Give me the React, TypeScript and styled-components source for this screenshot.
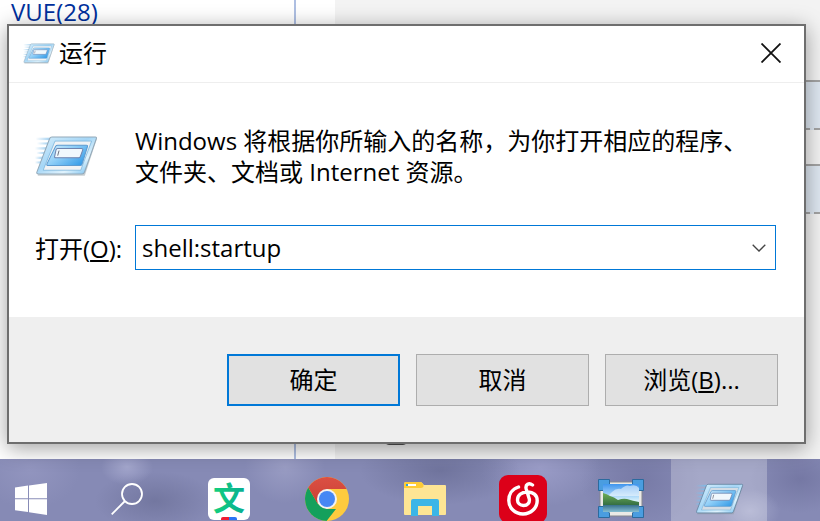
import React, { useId, useState } from "react";
import styled, { createGlobalStyle } from "styled-components";

const GlobalStyle = createGlobalStyle`
  * { box-sizing: border-box; }
  body {
    margin: 0;
    overflow: hidden;
    font-family: "Open Sans", "Noto Sans CJK SC", sans-serif;
    font-size: 24px;
    line-height: 32px;
    color: #000;
  }
  button, input { font: inherit; color: inherit; }
  svg { display: block; flex: none; }
`;

const Screen = styled.div`
  display: flex;
  flex-direction: column;
  height: 100vh;
`;

const Desktop = styled.main`
  position: relative;
  flex: 1;
  min-height: 0;
  display: flex;
  background: #fff;
`;

const Sidebar = styled.nav`
  width: 296px;
  padding: 0 11px;
  border-right: 2px solid #aebfe2;
  line-height: 24px;
`;

const CategoryLink = styled.a`
  color: #00309c;
  text-decoration: none;
`;

const Article = styled.section`
  flex: 1;
  display: flex;
  flex-direction: column;
  gap: 34px;
  margin-left: 39px;
  padding: 80px 0 14px;
  background: #f3f3f3;
`;

const CodeBlock = styled.div`
  height: 50px;
  border-top: 2px solid #a4a4a4;
  border-bottom: 2px dashed #a4a4a4;
  background: #dfe8f2;
`;

const Marker = styled.div`
  width: 24px;
  height: 20px;
  margin: auto 0 0 49px;
  border: 2px solid #505050;
  border-radius: 5px;
`;

const Dialog = styled.form`
  position: absolute;
  top: 24px;
  left: 7px;
  right: 14px;
  border: 2px solid #6e6e6e;
  background: #fff;
  box-shadow: 0 4px 20px rgba(0, 0, 0, 0.38);
`;

const TitleBar = styled.header`
  display: flex;
  align-items: center;
  height: 57px;
  padding: 0 13px 2px 14px;
  gap: 4px;
  border-bottom: 1px solid #eee;
`;

const Title = styled.h1`
  flex: 1;
  margin: 0;
  font-size: 24px;
  font-weight: 400;
  line-height: 32px;
`;

const CloseButton = styled.button`
  display: grid;
  place-items: center;
  width: 40px;
  height: 40px;
  padding: 0;
  border: 0;
  background: none;
`;

const Body = styled.div`
  padding: 42px 28px 47px 26px;
`;

const Message = styled.div`
  display: flex;
  align-items: center;
  gap: 37px;
  margin-bottom: 38px;
`;

const Description = styled.p`
  flex: 1;
  margin: 0;
  font-size: 24px;
  line-height: 31px;
`;

const Field = styled.div`
  display: flex;
  align-items: center;
`;

const Label = styled.label`
  width: 100px;
  padding-top: 2px;
  white-space: nowrap;
`;

const Combo = styled.div`
  flex: 1;
  display: flex;
  height: 45px;
  border: 1px solid #0078d7;
`;

const ComboInput = styled.input`
  flex: 1;
  min-width: 0;
  padding: 0 6px;
  border: 0;
  outline: 0;
  background: none;
`;

const ComboButton = styled.button`
  display: grid;
  place-items: center;
  width: 32px;
  padding: 0;
  border: 0;
  background: none;
`;

const Footer = styled.footer`
  display: flex;
  justify-content: flex-end;
  gap: 16px;
  padding: 37px 26px 36px;
  background: #efefef;
`;

const PushButton = styled.button<{ $primary?: boolean }>`
  width: 173px;
  height: 52px;
  padding: 0;
  border: ${(p) => (p.$primary ? "2px solid #0078d7" : "1px solid #adadad")};
  background: #e1e1e1;
`;

const Taskbar = styled.nav`
  flex: none;
  display: flex;
  align-items: flex-start;
  gap: 2px;
  height: 62px;
  overflow: hidden;
  background:
    radial-gradient(ellipse 26px 18px at 127px 8px, #a3a6cc 0, transparent 100%),
    radial-gradient(ellipse 60px 30px at 155px 42px, #7377a0 0, transparent 100%),
    radial-gradient(ellipse 50px 40px at 30px 10px, #9295bf 0, transparent 100%),
    radial-gradient(ellipse 40px 36px at 285px 8px, #999cc3 0, transparent 100%),
    radial-gradient(ellipse 80px 34px at 440px 12px, #70749d 0, transparent 100%),
    radial-gradient(ellipse 60px 40px at 540px 8px, #9a9cc7 0, transparent 100%),
    radial-gradient(ellipse 60px 50px at 640px 20px, #777aa6 0, transparent 100%),
    radial-gradient(ellipse 30px 22px at 750px 52px, #a2a6ca 0, transparent 100%),
    radial-gradient(ellipse 50px 34px at 800px 20px, #7578a4 0, transparent 100%),
    #868ab5;
`;

const TaskButton = styled.button<{ $active?: boolean }>`
  display: grid;
  place-items: center;
  width: 96px;
  height: 80px;
  padding: 0;
  border: 0;
  background: ${(p) => (p.$active ? "rgba(255, 255, 255, 0.26)" : "none")};
`;

const StartButton = styled(TaskButton)`
  width: 77px;
  padding-right: 15px;
`;

const SearchButton = styled(TaskButton)`
  margin-right: 4px;
`;

function RunIcon({ width, strong }: { width: number; strong?: boolean }) {
  const id = useId();
  const edge = strong ? "#5f7f9c" : "#93a9b9";
  return (
    <svg width={width} height={Math.round(width * 0.66)} viewBox="0 0 186 122" aria-hidden="true">
      <defs>
        <linearGradient id={id + "a"} x1="0" y1="0" x2="1" y2="1">
          <stop offset="0" stopColor="#d8effc" />
          <stop offset="0.45" stopColor="#a5d6f6" />
          <stop offset="0.7" stopColor="#e0f3fd" />
          <stop offset="1" stopColor="#5fb4ec" />
        </linearGradient>
        <linearGradient id={id + "b"} x1="0" y1="0" x2="1" y2="0.7">
          <stop offset="0" stopColor="#d8f0fd" />
          <stop offset="0.5" stopColor="#8dcdf7" />
          <stop offset="1" stopColor="#3a9ee8" />
        </linearGradient>
        <linearGradient id={id + "c"}>
          <stop offset="0" stopColor="#79bdec" stopOpacity="0" />
          <stop offset="1" stopColor="#79bdec" />
        </linearGradient>
      </defs>
      <g fill={`url(#${id}c)`} opacity={strong ? 1 : 0.7}>
        <rect x="2" y="7" width="44" height="7" />
        <rect x="6" y="21" width="34" height="6" />
        <rect x="0" y="35" width="36" height="7" />
        <rect x="4" y="49" width="26" height="6" />
        <rect x="0" y="63" width="24" height="7" />
        <rect x="0" y="77" width="18" height="6" />
      </g>
      <path d="M48 9H183L147 119H8Z" fill="#8a969e" opacity=".45" />
      <path d="M50 5H178Q183 5 181 10L146 109Q144 114 139 114H10Q3 114 6 107L43 10Q45 5 50 5Z" fill={`url(#${id}a)`} stroke={edge} strokeWidth="3" />
      <path d="M59 17H167L135 103H24Z" fill={strong ? "#d3dce5" : "#f1f3f5"} stroke="#6caed9" strokeWidth="2" />
      <path d="M67 29H152Q156 29 155 33L139 85Q138 89 134 89H38Q34 89 35 85L61 32Q63 29 67 29Z" fill={`url(#${id}b)`} stroke="#5e9bd0" strokeWidth="3" />
      <path d="M67 39H137Q142 39 141 43L134 62Q133 66 129 66H61Q57 66 58 62L62 43Q63 39 67 39Z" fill="#f0f8fd" stroke="#6f83ae" strokeWidth="3" />
      <path d="M71 45L67 60" stroke="#334" strokeWidth="2" />
    </svg>
  );
}

function WindowsIcon() {
  return (
    <svg width="32" height="32" viewBox="0 0 32 32" fill="#fff" aria-hidden="true">
      <path d="M0 4.4L13 2.6V15.2H0ZM14 2.4L32 0V15.2H14ZM0 16.2H13V29L0 27.3ZM14 16.2H32V32L14 29.2Z" />
    </svg>
  );
}

function SearchIcon() {
  return (
    <svg width="32" height="32" viewBox="0 0 32 32" fill="none" stroke="#fff" strokeWidth="1.8" aria-hidden="true">
      <circle cx="21" cy="11" r="10" />
      <path d="M14 18L.7 31.3" />
    </svg>
  );
}

function TranslateIcon() {
  return (
    <svg width="42" height="42" viewBox="0 0 42 42" aria-hidden="true">
      <defs>
        <linearGradient id="jade" x1="0" x2="1">
          <stop offset="0" stopColor="#13cf7c" />
          <stop offset="1" stopColor="#08ae93" />
        </linearGradient>
      </defs>
      <rect width="42" height="42" rx="6" fill="#fff" />
      <text x="21" y="32" textAnchor="middle" fontFamily="'Noto Sans CJK SC', sans-serif" fontWeight="700" fontSize="32" fill="url(#jade)">文</text>
      <path d="M13 42V41Q13 39 15 39H21V42Z" fill="#ef1b32" />
      <path d="M21 39H27Q29 39 29 41V42H21Z" fill="#2a74f5" />
    </svg>
  );
}

function ChromeIcon() {
  return (
    <svg width="44" height="44" viewBox="0 0 44 44" aria-hidden="true">
      <defs>
        <clipPath id="disc"><circle cx="22" cy="22" r="22" /></clipPath>
        <linearGradient id="chromeRed" x1="0" y1="0" x2="0" y2="1">
          <stop offset="0" stopColor="#dc5145" />
          <stop offset="1" stopColor="#cc4034" />
        </linearGradient>
      </defs>
      <g clipPath="url(#disc)">
        <rect width="44" height="44" fill="#fecb3e" />
        <path d="M3 10L13 27L22 32H31L20 46H-2V8Z" fill="#14a05c" />
        <path d="M3 10V-2H44V12H22L12.5 26.5Z" fill="url(#chromeRed)" />
      </g>
      <circle cx="22" cy="22" r="10" fill="#f2f2f2" />
      <circle cx="22" cy="22" r="8" fill="#4687f4" />
    </svg>
  );
}

function FolderIcon() {
  return (
    <svg width="42" height="34" viewBox="0 0 42 34" aria-hidden="true">
      <path d="M0 2Q0 0 2 0H16Q18 0 19 2L20 3H41Q42 3 42 4V32Q42 33 41 33H1Q0 33 0 32Z" fill="#fee594" />
      <path d="M0 2Q0 0 2 0H16Q18 0 19 2Q21 6 16 6H0Z" fill="#fecb35" />
      <rect x="2" y="2" width="10" height="2" fill="#fff" />
      <rect x="2" y="2" width="2" height="2" fill="#2aa6e0" />
      <path d="M7 34V19Q7 17 9 17H33Q35 17 35 19V34H28V24H14V34Z" fill="#3cb5e7" />
    </svg>
  );
}

function MusicIcon() {
  return (
    <svg width="48" height="48" viewBox="0 0 48 48" fill="none" aria-hidden="true">
      <rect width="48" height="48" rx="9" fill="#dc0019" />
      <path
        d="M19.500 12C13 14 9.800 19.500 9.800 25.500C9.800 33 16 39 24 39C32 39 38.200 33 38.200 25.500C38.200 20 34 16.800 28.500 17C22 17.200 18.500 20.500 18.500 25C18.500 28 21 30.500 24.500 30.500C28.500 30.500 31 27.500 30.300 24L27.200 14C26 9.500 30 7.300 33.500 10"
        stroke="#fff"
        strokeWidth="3.4"
        strokeLinecap="round"
        strokeLinejoin="round"
      />
    </svg>
  );
}

function PictureIcon() {
  return (
    <svg width="46" height="40" viewBox="0 0 46 40" aria-hidden="true">
      <defs>
        <linearGradient id="sky" x1="0" y1="0" x2="0" y2="1">
          <stop offset="0" stopColor="#3f95ee" />
          <stop offset="0.6" stopColor="#d9f2fc" />
        </linearGradient>
        <linearGradient id="lake" x1="0" y1="0" x2="0" y2="1">
          <stop offset="0" stopColor="#376f8c" />
          <stop offset="1" stopColor="#86bfd2" />
        </linearGradient>
        <linearGradient id="hill" x1="0" y1="0" x2="0" y2="1">
          <stop offset="0" stopColor="#6fae55" />
          <stop offset="1" stopColor="#2b6440" />
        </linearGradient>
      </defs>
      <rect x="2" y="3" width="42" height="34" rx="1" fill="#ebeae6" stroke="#85878e" />
      <g fill="#4a9de0" stroke="#2b6a9e">
        <path d="M.5 .5H11.500V5L5 11.500H.5ZM45.500 .5H34.500V5L41 11.500H45.500ZM.5 38.500H11.500V34L5 27.500H.5ZM45.500 38.500H34.500V34L41 27.500H45.500Z" />
      </g>
      <rect x="5" y="5" width="36" height="28" rx="1" fill="url(#sky)" />
      <path d="M14 13Q18 9 23 10Q28 5 32 7Q38 5 41 9V17H10Z" fill="#fff" opacity=".5" />
      <path d="M5 14Q9 15 12 17Q16 18 20 21Q25 19 29 20Q35 22 41 23V28H5Z" fill="url(#hill)" />
      <rect x="5" y="26" width="36" height="7" fill="url(#lake)" />
    </svg>
  );
}

export default function App() {
  const [command, setCommand] = useState("shell:startup");
  return (
    <>
      <GlobalStyle />
      <Screen>
        <Desktop>
          <Sidebar>
            <CategoryLink href="#vue">VUE(28)</CategoryLink>
          </Sidebar>
          <Article>
            <CodeBlock />
            <CodeBlock />
            <Marker />
          </Article>
          <Dialog role="dialog" aria-labelledby="run-title" onSubmit={(e) => e.preventDefault()}>
            <TitleBar>
              <RunIcon width={32} />
              <Title id="run-title">运行</Title>
              <CloseButton type="button" aria-label="关闭">
                <svg width="20" height="20" viewBox="0 0 20 20" stroke="#111" strokeWidth="1.8" aria-hidden="true">
                  <path d="M.5 .5L19.500 19.500M19.500 .5L.5 19.500" />
                </svg>
              </CloseButton>
            </TitleBar>
            <Body>
              <Message>
                <RunIcon width={63} />
                <Description>
                  Windows 将根据你所输入的名称，为你打开相应的程序、
                  <br />
                  文件夹、文档或 Internet 资源。
                </Description>
              </Message>
              <Field>
                <Label htmlFor="command">打开(<u>O</u>):</Label>
                <Combo>
                  <ComboInput id="command" type="text" value={command} onChange={(e) => setCommand(e.target.value)} />
                  <ComboButton type="button" aria-label="历史记录">
                    <svg width="14" height="8" viewBox="0 0 14 8" fill="none" stroke="#444" strokeWidth="1.3" aria-hidden="true">
                      <path d="M.7 .7L7 7L13.300 .7" />
                    </svg>
                  </ComboButton>
                </Combo>
              </Field>
            </Body>
            <Footer>
              <PushButton type="submit" $primary>确定</PushButton>
              <PushButton type="button">取消</PushButton>
              <PushButton type="button">浏览(<u>B</u>)...</PushButton>
            </Footer>
          </Dialog>
        </Desktop>
        <Taskbar>
          <StartButton type="button" aria-label="开始"><WindowsIcon /></StartButton>
          <SearchButton type="button" aria-label="搜索"><SearchIcon /></SearchButton>
          <TaskButton type="button" aria-label="翻译"><TranslateIcon /></TaskButton>
          <TaskButton type="button" aria-label="Chrome"><ChromeIcon /></TaskButton>
          <TaskButton type="button" aria-label="文件资源管理器"><FolderIcon /></TaskButton>
          <TaskButton type="button" aria-label="音乐"><MusicIcon /></TaskButton>
          <TaskButton type="button" aria-label="图片"><PictureIcon /></TaskButton>
          <TaskButton type="button" aria-label="运行" $active><RunIcon width={49} strong /></TaskButton>
        </Taskbar>
      </Screen>
    </>
  );
}
